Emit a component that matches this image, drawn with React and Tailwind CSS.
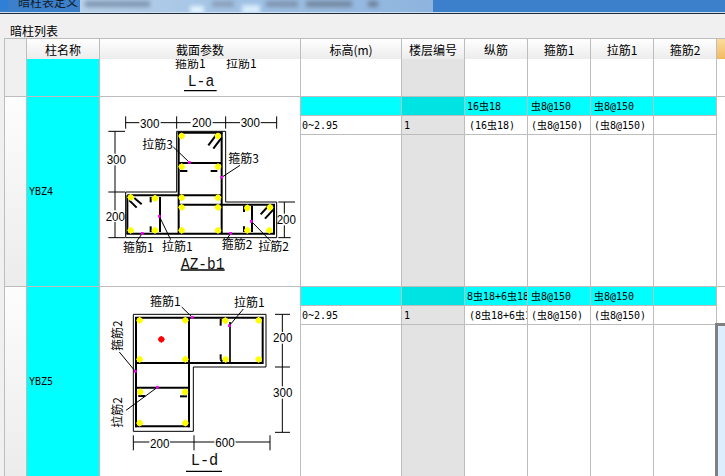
import React from "react";

const COLS = "grid-cols-[22px_73px_201px_101px_63px_63px_63px_63px_63px_8px]";
const CN = "'Noto Sans CJK SC', sans-serif";
const MONO = "'DejaVu Sans Mono', 'Noto Sans CJK SC', monospace";

// 纵筋 etc. per row, [cyan line, white line]
const ROW_A = [
  ["", "0~2.95"],
  ["", "1"],
  ["16虫18", "(16虫18)"],
  ["虫8@150", "(虫8@150)"],
  ["虫8@150", "(虫8@150)"],
  ["", ""],
];
const ROW_B = [
  ["", "0~2.95"],
  ["", "1"],
  ["8虫18+6虫18", "(8虫18+6虫18)"],
  ["虫8@150", "(虫8@150)"],
  ["虫8@150", "(虫8@150)"],
  ["", ""],
];

const HEADERS = ["标高(m)", "楼层编号", "纵筋", "箍筋1", "拉筋1", "箍筋2"];
const TOP_PAD = ["pl-[1px]", "pl-[2px]", "pl-[2px]", "pl-[3px]", "pl-[3px]", "pl-[2px]"];
const BOTTOM_PAD = ["pl-[1px]", "pl-[2px]", "pl-[4px]", "pl-[3px]", "pl-[3px]", "pl-[2px]"];

const Lines = ({ items, width = 3, color = "#000" }) => (
  <g stroke={color} strokeWidth={width} fill="none" strokeLinecap="butt">
    {items.map((l, i) => (
      <line key={i} x1={l[0]} y1={l[1]} x2={l[2]} y2={l[3]} />
    ))}
  </g>
);

const Bars = ({ items }) => (
  <g>
    {items.map(([x, y], i) => (
      <g key={i} stroke="#ffff00" strokeWidth="3">
        <circle cx={x} cy={y} r="8" fill="#ffff00" />
        <line x1={x - 10} y1={y} x2={x + 10} y2={y} />
        <line x1={x} y1={y - 10} x2={x} y2={y + 10} />
      </g>
    ))}
  </g>
);

const Marks = ({ items }) => (
  <g fill="#ff00ff">
    {items.map(([x, y], i) => (
      <rect key={i} x={x - 4} y={y - 4} width="8" height="8" />
    ))}
  </g>
);

const Label = ({ x, y, children, rotate }) => (
  <text
    x={x}
    y={y}
    fontSize="36"
    fontFamily={CN}
    fill="#000"
    transform={rotate ? `rotate(-90 ${x} ${y})` : undefined}
  >
    {children}
  </text>
);

const Dim = ({ x, y, children }) => (
  <text
    x={x - 29}
    y={y}
    fontSize="40"
    fontFamily="'Liberation Sans', sans-serif"
    fill="#000"
    textLength="58"
    lengthAdjust="spacingAndGlyphs"
  >
    {children}
  </text>
);

const Title = ({ x, y, length, children }) => (
  <text
    x={x}
    y={y}
    fontSize="50"
    fontFamily="'Liberation Mono', monospace"
    fill="#111"
    textLength={length}
    lengthAdjust="spacingAndGlyphs"
  >
    {children}
  </text>
);

const DrawingLa = () => (
  <svg viewBox="300 177 600 111" width="200" height="37" className="block">
    <Label x={525} y={204}>箍筋1</Label>
    <Label x={678} y={204}>拉筋1</Label>
    <Title x={563} y={258} length={80}>L-a</Title>
    <Lines width={4} items={[[552, 272, 650, 272]]} />
  </svg>
);

const DrawingAz = () => (
  <svg viewBox="0 0 600 567" width="200" height="189" className="block">
    <polygon
      points="230,103 377,103 377,315 530,315 530,422 77,422 77,285 230,285"
      fill="none"
      stroke="#000"
      strokeWidth="3"
    />
    {/* dimensions */}
    <Lines
      items={[
        [77, 77, 118, 77], [182, 77, 272, 77], [338, 77, 420, 77], [482, 77, 530, 77],
        [77, 58, 77, 95], [230, 58, 230, 95], [377, 58, 377, 95], [530, 58, 530, 95],
        [45, 103, 45, 170], [45, 205, 45, 340], [45, 375, 45, 422],
        [25, 103, 75, 103], [25, 285, 75, 285], [25, 422, 75, 422],
        [553, 315, 553, 350], [553, 385, 553, 422],
        [535, 315, 585, 315], [535, 422, 572, 422],
      ]}
    />
    {/* stirrups */}
    <Lines
      width={6}
      items={[
        [233, 107, 368, 107], [236, 107, 236, 410], [365, 107, 365, 410],
        [236, 198, 365, 198], [82, 295, 365, 295], [236, 323, 525, 323],
        [79, 410, 525, 410], [82, 295, 82, 410], [522, 323, 522, 410],
        [180, 300, 180, 405], [456, 326, 456, 405],
        [152, 300, 152, 316], [152, 388, 152, 405], [432, 326, 432, 345], [432, 388, 432, 405],
        [88, 310, 110, 332], [103, 303, 125, 322],
        [325, 145, 350, 112], [340, 155, 365, 122],
        [482, 352, 505, 327], [495, 365, 520, 338],
        [240, 222, 262, 222], [332, 222, 352, 222],
      ]}
    />
    <Bars
      items={[
        [245, 117], [354, 117], [245, 209], [354, 209], [245, 302], [354, 302],
        [92, 301], [165, 304], [245, 331], [354, 331], [442, 333], [510, 331],
        [92, 400], [165, 400], [245, 400], [354, 400], [442, 400], [508, 400],
      ]}
    />
    {/* leaders */}
    <Lines
      items={[
        [268, 196, 220, 150], [365, 241, 420, 205], [178, 358, 212, 428],
        [127, 409, 108, 436], [392, 409, 378, 430], [454, 373, 512, 432],
      ]}
    />
    <Marks items={[[268, 196], [365, 241], [178, 358], [127, 409], [392, 409], [454, 373]]} />
    <Dim x={149} y={92}>300</Dim>
    <Dim x={305} y={90}>200</Dim>
    <Dim x={451} y={90}>300</Dim>
    <Dim x={49} y={201}>300</Dim>
    <Dim x={46} y={371}>200</Dim>
    <Dim x={559} y={382}>200</Dim>
    <Label x={127} y={156}>拉筋3</Label>
    <Label x={385} y={198}>箍筋3</Label>
    <Label x={69} y={466}>箍筋1</Label>
    <Label x={186} y={463}>拉筋1</Label>
    <Label x={365} y={456}>箍筋2</Label>
    <Label x={475} y={463}>拉筋2</Label>
    <Title x={243} y={515} length={130}>AZ-b1</Title>
    <Lines width={4} items={[[242, 519, 374, 519]]} />
  </svg>
);

const DrawingLd = () => (
  <svg viewBox="0 0 600 570" width="200" height="190" className="block">
    <polygon
      points="100,82 498,82 498,240 280,240 280,433 100,433"
      fill="none"
      stroke="#000"
      strokeWidth="3"
    />
    <Lines
      items={[
        [547, 82, 547, 135], [547, 170, 547, 298], [547, 335, 547, 436],
        [525, 82, 570, 82], [525, 240, 570, 240], [525, 436, 570, 436],
        [100, 465, 148, 465], [210, 465, 343, 465], [407, 465, 510, 465],
        [100, 445, 100, 490], [282, 445, 282, 490], [510, 445, 510, 490],
      ]}
    />
    <Lines
      width={6}
      items={[
        [105, 92, 491, 92], [108, 92, 108, 421], [267, 92, 267, 421], [488, 92, 488, 231],
        [108, 228, 488, 228], [108, 302, 267, 302], [105, 418, 270, 418],
        [360, 100, 365, 97], [362, 100, 362, 116], [362, 202, 362, 218], [362, 218, 367, 224],
        [115, 327, 136, 327], [240, 328, 261, 328],
      ]}
    />
    <Lines width={5} items={[[390, 105, 390, 226]]} />
    <Bars
      items={[
        [119, 100], [256, 100], [376, 101], [476, 100], [119, 217], [256, 217],
        [377, 217], [476, 217], [121, 315], [255, 315], [119, 408], [256, 408],
      ]}
    />
    <g stroke="#ff0000" strokeWidth="3">
      <circle cx="184" cy="157" r="8" fill="#ff0000" />
      <line x1="174" y1="157" x2="194" y2="157" />
      <line x1="184" y1="147" x2="184" y2="167" />
    </g>
    <Lines
      items={[
        [277, 91, 245, 60], [388, 116, 430, 66], [106, 253, 58, 195], [172, 301, 78, 370],
      ]}
    />
    <Marks items={[[277, 91], [388, 116], [106, 253], [172, 301]]} />
    <Dim x={548} y={166}>200</Dim>
    <Dim x={548} y={330}>300</Dim>
    <Dim x={179} y={483}>200</Dim>
    <Dim x={375} y={481}>600</Dim>
    <Label x={150} y={56}>箍筋1</Label>
    <Label x={402} y={59}>拉筋1</Label>
    <Label x={65} y={192} rotate>箍筋2</Label>
    <Label x={65} y={422} rotate>拉筋2</Label>
    <Title x={272} y={534} length={83}>L-d</Title>
    <Lines width={4} items={[[258, 553, 366, 553]]} />
  </svg>
);

const cellBorder = "border-r border-[#bdbdbd]";

const RightCols = ({ data }) =>
  data.map(([top, bottom], i) => (
    <div key={i} className={`flex flex-col overflow-hidden ${cellBorder} ${i === 1 ? "bg-[#e3e3e3]" : "bg-white"}`}>
      <div
        className={`flex h-[19px] shrink-0 items-center overflow-hidden whitespace-nowrap border-b border-[#bdbdbd] text-[10px] ${TOP_PAD[i]} ${
          i === 1 ? "bg-[#00e3e3]" : "bg-[#00ffff]"
        }`}
      >
        {top}
      </div>
      <div
        className={`flex h-[19px] shrink-0 items-center overflow-hidden whitespace-nowrap border-b border-[#bdbdbd] text-[10px] ${BOTTOM_PAD[i]}`}
      >
        {bottom}
      </div>
    </div>
  ));

const Row = ({ name, data, children }) => (
  <div className={`grid ${COLS} h-[190px] border-b border-[#bdbdbd] overflow-hidden`} style={{ fontFamily: MONO }}>
    <div className={`${cellBorder} bg-gradient-to-b from-[#fdfdfd] to-[#ececec]`} />
    <div className={`${cellBorder} flex items-center bg-[#00ffff] pl-[2px] text-[10px]`}>{name}</div>
    <div className={`${cellBorder} overflow-hidden bg-white`}>{children}</div>
    <RightCols data={data} />
    <div className="bg-white" />
  </div>
);

const EmptyRow = () => (
  <div className={`grid ${COLS} h-[38px] border-b border-[#bdbdbd] overflow-hidden`}>
    <div className={`${cellBorder} bg-[#f0f0f0]`} />
    <div className={`${cellBorder} bg-[#00ffff]`} />
    <div className={`${cellBorder} overflow-hidden bg-white`}>
      <DrawingLa />
    </div>
    {HEADERS.map((h, i) => (
      <div key={h} className={`${cellBorder} ${i === 1 ? "bg-[#e3e3e3]" : "bg-white"}`} />
    ))}
    <div className="bg-white" />
  </div>
);

export default function App() {
  return (
    <div className="relative h-[476px] w-[725px] overflow-hidden bg-[#f0f0f0]" style={{ fontFamily: CN }}>
      {/* blurred title bar */}
      <div className="flex h-[12px] overflow-hidden bg-[#3c80cc]">
        <div className="h-[10px] w-[8px] shrink-0 rounded-br-sm bg-[#2f7fd6]" />
        <div className="-mt-[6px] ml-[10px] h-[18px] w-[62px] shrink-0 text-[12px] leading-[16px] text-[#111c28]">
          暗柱表定义
        </div>
        <div className="flex h-[12px] w-[353px] shrink-0 overflow-hidden bg-gradient-to-r from-[#b9d2ea] via-[#9fc0e4] to-[#8eb4de]">
          <div className="ml-[5px] mt-[1px] h-[6px] w-[65px] bg-[#8096b2] blur-[2px]" />
          <div className="ml-[40px] mt-[6px] h-[8px] w-[14px] bg-[#e0f2ff] blur-[2px]" />
          <div className="ml-[8px] mt-[1px] h-[6px] w-[22px] bg-[#8b9fba] blur-[2px]" />
          <div className="ml-[8px] mt-[5px] h-[9px] w-[18px] bg-[#d8ecfc] blur-[2px]" />
          <div className="ml-[6px] mt-[1px] h-[6px] w-[32px] bg-[#7f93ae] blur-[2px]" />
          <div className="ml-[8px] mt-[1px] h-[6px] w-[46px] bg-[#73889f] blur-[2px]" />
          <div className="ml-[16px] mt-[1px] h-[6px] w-[10px] bg-[#6f8199] blur-[2px]" />
        </div>
      </div>
      <div className="h-[1px] bg-[#cfe0f0]" />
      <div className="h-[1px] bg-[#1d2b3a]" />

      <div className="pl-[10px] pt-[9px] text-[12px] leading-[15px] text-black">暗柱列表</div>

      <div className="ml-[4px] border-l border-t border-[#bdbdbd]">
        {/* header */}
        <div className={`grid ${COLS} h-[20px] border-b border-[#bdbdbd] text-[12px] text-black`}>
          <div className={`${cellBorder} bg-[#f0f0f0]`} />
          <div className={`${cellBorder} bg-gradient-to-b from-white to-[#ebebeb] text-center leading-[21px]`}>柱名称</div>
          <div className={`${cellBorder} bg-gradient-to-b from-white to-[#ebebeb] text-center leading-[21px]`}>截面参数</div>
          {HEADERS.map((h) => (
            <div key={h} className={`${cellBorder} bg-gradient-to-b from-white to-[#ebebeb] text-center leading-[21px]`}>
              {h}
            </div>
          ))}
          <div className="bg-gradient-to-b from-[#fbdc9c] to-[#f2b85c]" />
        </div>

        <EmptyRow />
        <Row name="YBZ4" data={ROW_A}>
          <DrawingAz />
        </Row>
        <Row name="YBZ5" data={ROW_B}>
          <DrawingLd />
        </Row>
      </div>

      {/* corner of the window lying over the table */}
      <div className="absolute left-[715px] top-[323px] h-[153px] w-[10px] border-l-[3px] border-t-[3px] border-[#808080] bg-[#ddeeff]" />
    </div>
  );
}
